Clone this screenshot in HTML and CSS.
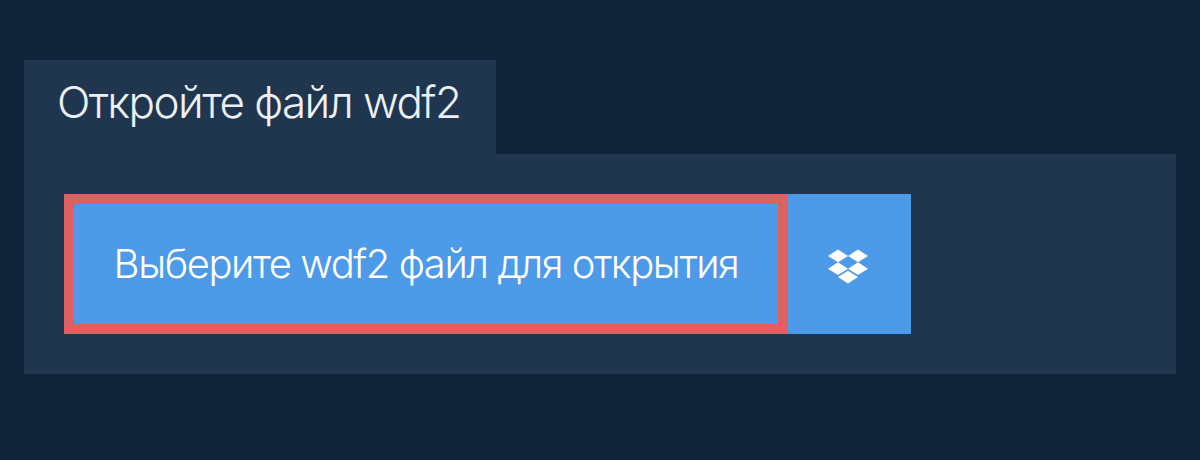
FILE: index.html
```html
<!DOCTYPE html>
<html lang="ru">
<head>
    <meta charset="UTF-8">
    <title>Откройте файл wdf2</title>
    <link rel="stylesheet" href="styles.css">
</head>
<body>
    <div class="wrapper">
        <div class="tab">Откройте файл wdf2</div>
        <div class="panel">
            <button class="open-btn" type="button">Выберите wdf2 файл для открытия</button>
            <button class="dropbox-btn" type="button" aria-label="Dropbox">
                <svg class="dropbox-icon" viewBox="0 0 528 512">
                    <path fill="currentColor" d="M264.4 116.3l-132 84.3 132 84.3-132 84.3L0 284.1l132.3-84.3L0 116.3 132.3 32l132.1 84.3zM131.6 395.7l132-84.3 132 84.3-132 84.3-132-84.3zm132.8-111.6l132-84.3-132-83.6L395.7 32 528 116.3l-132.3 84.3L528 284.8l-132.3 84.3-131.3-85z"/>
                </svg>
            </button>
        </div>
    </div>
</body>
</html>
```

FILE: styles.css
```css
* {
    margin: 0;
    padding: 0;
    box-sizing: border-box;
}

body {
    font-family: Inter, "Noto Sans", sans-serif;
    background: #0f2439;
    min-height: 100vh;
    overflow: hidden;
}

.wrapper {
    display: flex;
    flex-direction: column;
    align-items: flex-start;
    padding: 60px 24px 0;
}

.tab {
    background: #20364f;
    color: #edf0f3;
    font-size: 44px;
    font-weight: 300;
    letter-spacing: -1.56px;
    line-height: 48px;
    white-space: nowrap;
    width: 472px;
    height: 94px;
    padding: 18px 33px 28px;
}

.panel {
    display: flex;
    width: 100%;
    padding: 40px;
    background: #20364f;
}

button {
    border: none;
    background: #4c9ae8;
    color: #fff;
    font-family: inherit;
    cursor: pointer;
}

.open-btn {
    width: 724px;
    height: 140px;
    border: 10px solid #e0605f;
    padding-bottom: 2px;
    font-size: 40px;
    font-weight: 300;
    letter-spacing: -1.43px;
}

.dropbox-btn {
    display: flex;
    align-items: center;
    justify-content: center;
    width: 123px;
    height: 140px;
    padding: 4px 3px 0 0;
}

.dropbox-icon {
    width: 40px;
    height: 39px;
}
```
